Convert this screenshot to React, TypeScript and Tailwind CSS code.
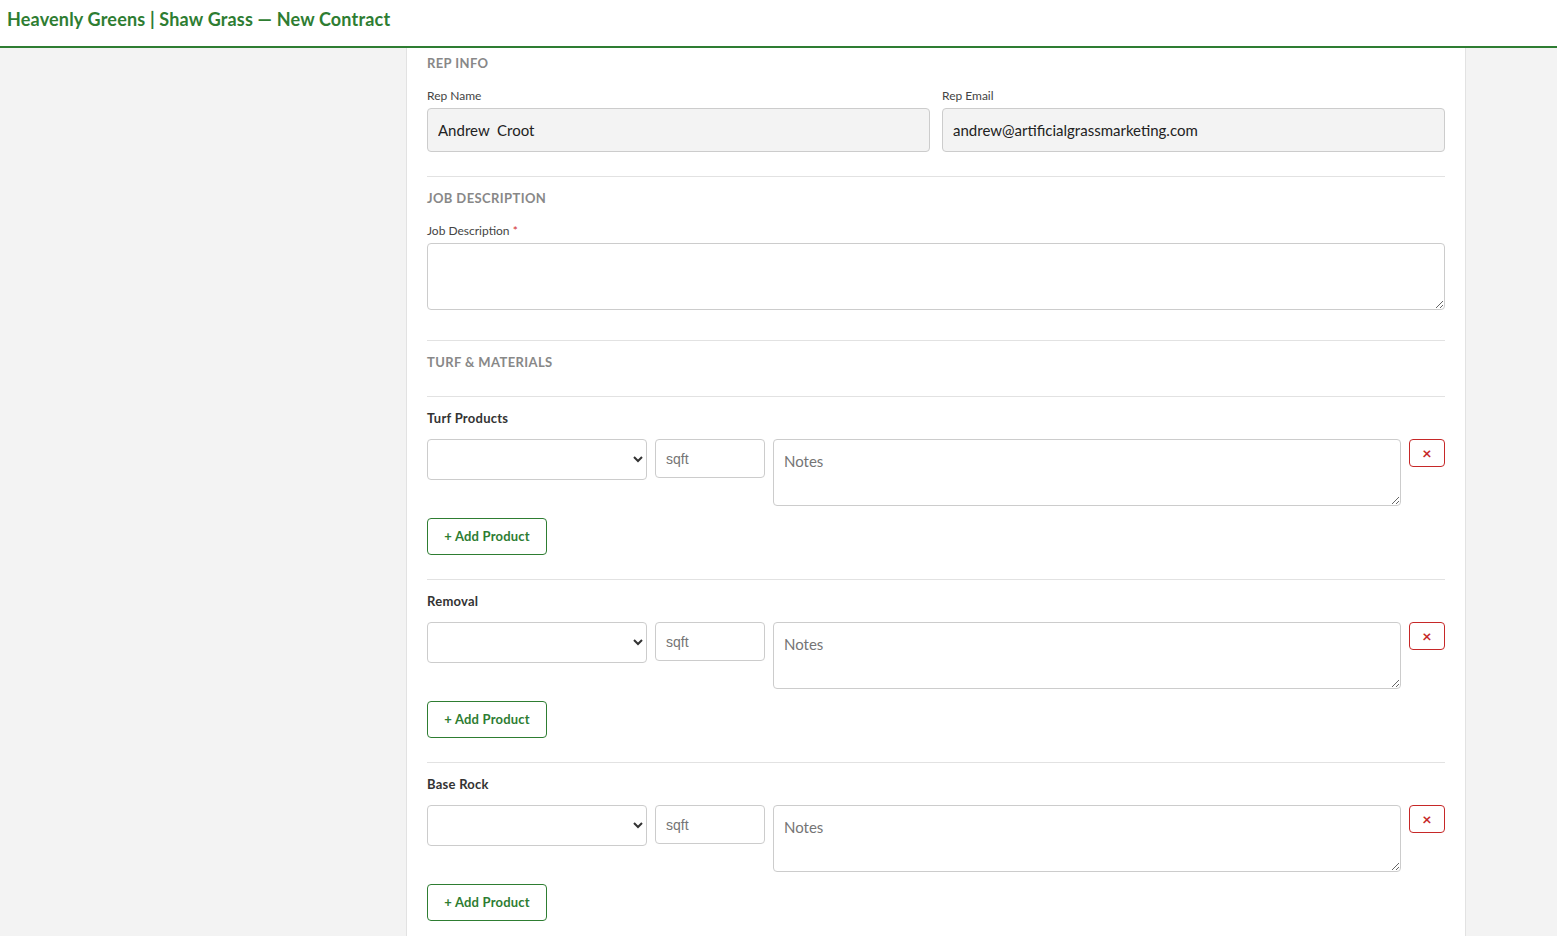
import React from 'react';

const font = { fontFamily: 'Lato, "Open Sans", "Liberation Sans", sans-serif' };

function SectionHeading({ children }: { children: React.ReactNode }) {
  return (
    <div className="h-4 leading-4 text-[13px] font-bold uppercase tracking-[0.03em] text-[#888]">
      {children}
    </div>
  );
}

function Divider() {
  return <div className="h-px bg-[#e2e2e2]" />;
}

function ProductGroup({ title }: { title: string }) {
  return (
    <div className="pt-[13px] pb-6">
      <div className="h-4 leading-4 text-[13px] font-bold tracking-[0.02em] text-[#333]">{title}</div>
      <div className="mt-[13px] flex items-start gap-2">
        <select className="h-[41px] w-[220px] rounded-[4px] border border-[#ccc] bg-white px-2 text-[14px] text-[#333]">
          <option value=""></option>
        </select>
        <input
          className="h-[39px] w-[110px] rounded-[4px] border border-[#ccc] bg-white px-[10px] text-[14px] placeholder:text-[#757575]"
          style={{ fontFamily: '"Liberation Sans", Arial, sans-serif' }}
          placeholder="sqft"
        />
        <textarea
          className="block h-[67px] flex-1 rounded-[4px] border border-[#ccc] bg-white px-[10px] py-[11px] text-[15px] leading-5 placeholder:text-[#757575]"
          placeholder="Notes"
        />
        <button className="flex h-7 w-9 items-center justify-center rounded-[4px] border border-[#c62828] bg-white text-[16px] font-bold leading-none text-[#c62828]">
          ×
        </button>
      </div>
      <button className="mt-3 h-[37px] w-[120px] rounded-[4px] border border-[#2e7d32] bg-white text-[13px] font-bold tracking-[0.015em] text-[#2e7d32]">
        + Add Product
      </button>
    </div>
  );
}

export default function App() {
  return (
    <div className="min-h-screen bg-[#f3f3f3]" style={font}>
      <header className="flex h-[48px] items-center border-b-2 border-[#2e7d32] bg-white px-[7px] pb-[7px]">
        <h1 className="text-[18px] font-bold tracking-[0.01em] text-[#2e7d32]">
          Heavenly Greens | Shaw Grass — New Contract
        </h1>
      </header>

      <div className="flex">
        <div className="w-[406px] shrink-0" />
        <main className="w-[1060px] shrink-0 border-x border-[#e2e2e2] bg-white px-5 pt-[7px]">
          {/* Rep info */}
          <section className="pb-6">
            <SectionHeading>Rep Info</SectionHeading>
            <div className="mt-4 grid grid-cols-2 gap-3">
              <div>
                <label className="block h-4 pt-px text-[12px] leading-4 text-[#444]">Rep Name</label>
                <input
                  readOnly
                  value="Andrew  Croot"
                  className="mt-[5px] block h-[44px] w-full rounded-[4px] border border-[#ccc] bg-[#f3f3f3] px-[10px] text-[15px] text-[#222]"
                />
              </div>
              <div>
                <label className="block h-4 pt-px text-[12px] leading-4 text-[#444]">Rep Email</label>
                <input
                  readOnly
                  value="andrew@artificialgrassmarketing.com"
                  className="mt-[5px] block h-[44px] w-full rounded-[4px] border border-[#ccc] bg-[#f3f3f3] px-[10px] text-[15px] text-[#222]"
                />
              </div>
            </div>
          </section>
          <Divider />

          {/* Job description */}
          <section className="pt-[13px] pb-[30px]">
            <SectionHeading>Job Description</SectionHeading>
            <label className="mt-4 block h-4 pt-px text-[12px] leading-4 text-[#444]">
              Job Description <span className="text-[#d32f2f]">*</span>
            </label>
            <textarea className="mt-[5px] block h-[67px] w-full rounded-[4px] border border-[#ccc] bg-white px-[10px] py-2 text-[15px]" />
          </section>
          <Divider />

          {/* Turf & materials */}
          <section className="pt-[13px] pb-[26px]">
            <SectionHeading>Turf &amp; Materials</SectionHeading>
          </section>
          <Divider />
          <ProductGroup title="Turf Products" />
          <Divider />
          <ProductGroup title="Removal" />
          <Divider />
          <ProductGroup title="Base Rock" />
        </main>
      </div>
    </div>
  );
}
